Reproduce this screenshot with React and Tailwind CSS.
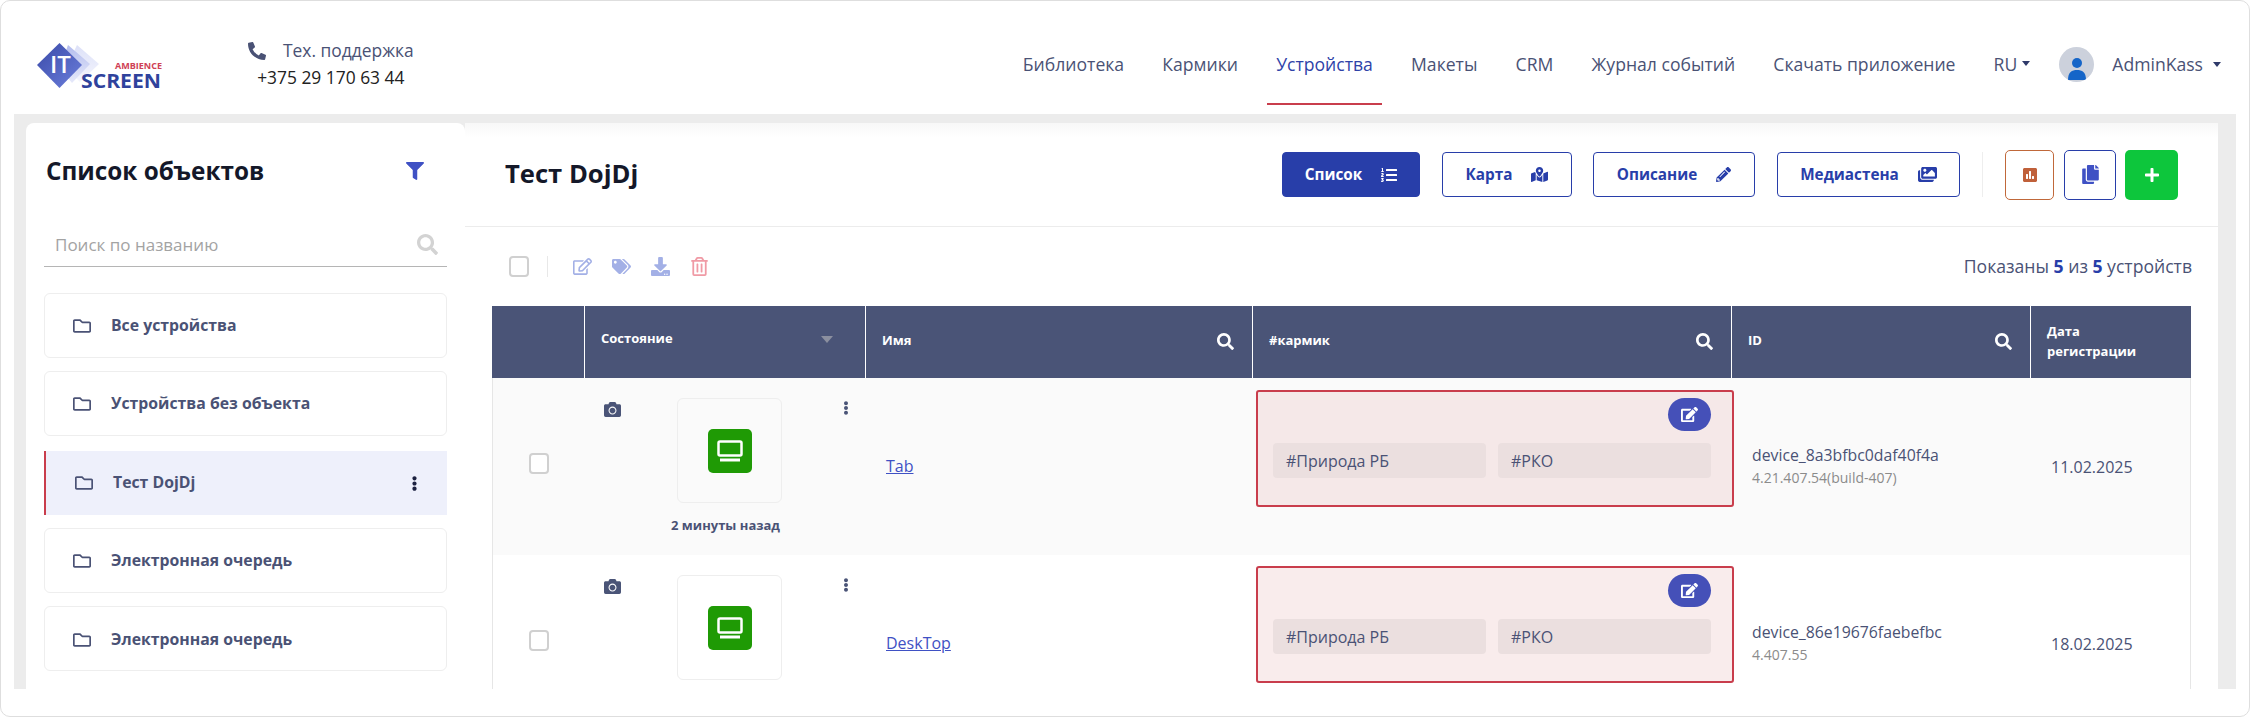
import {
  FaPhoneAlt,
  FaFilter,
  FaSearch,
  FaRegFolder,
  FaEllipsisV,
  FaListOl,
  FaMapMarkedAlt,
  FaPencilAlt,
  FaImages,
  FaPoll,
  FaCopy,
  FaPlus,
  FaRegEdit,
  FaTags,
  FaDownload,
  FaRegTrashAlt,
  FaCamera,
  FaEdit,
} from "react-icons/fa";

const NAV = [
  "Библиотека",
  "Кармики",
  "Устройства",
  "Макеты",
  "CRM",
  "Журнал событий",
  "Скачать приложение",
];

function Logo() {
  return (
    <svg width="128" height="50" viewBox="0 0 128 50" className="shrink-0">
      <defs>
        <linearGradient id="logoMain" x1="0" y1="0" x2="1" y2="1">
          <stop offset="0" stopColor="#3a4aa8" />
          <stop offset="1" stopColor="#6c7fdc" />
        </linearGradient>
        <linearGradient id="logoBack" x1="0" y1="0" x2="0" y2="1">
          <stop offset="0" stopColor="#b4bdee" />
          <stop offset="1" stopColor="#e6e9fa" />
        </linearGradient>
        <linearGradient id="logoBack2" x1="0" y1="0" x2="0" y2="1">
          <stop offset="0" stopColor="#dde1f8" />
          <stop offset="1" stopColor="#f4f5fd" />
        </linearGradient>
      </defs>
      <path d="M41 3 L63 22 L44 40 L30 26 Z" fill="url(#logoBack2)" />
      <path d="M32 3 L54 22 L36 41 L24 26 Z" fill="url(#logoBack)" />
      <path d="M23.5 1 L46 23 L23.5 46 L1 23 Z" fill="url(#logoMain)" />
      <text x="14" y="31" fill="#fff" fontFamily="'Open Sans', sans-serif" fontWeight="600" fontSize="24">
        IT
      </text>
      <text x="79" y="27" fill="#cf4155" fontFamily="'Open Sans', sans-serif" fontWeight="700" fontSize="9.5" textLength="47" lengthAdjust="spacingAndGlyphs">
        AMBIENCE
      </text>
      <text x="45" y="46" fill="#2f429c" fontFamily="'Open Sans', sans-serif" fontWeight="700" fontSize="20" textLength="80" lengthAdjust="spacingAndGlyphs">
        SCREEN
      </text>
    </svg>
  );
}

function Caret({ className }) {
  return <span className={"inline-block border-x-[4px] border-t-[5px] border-x-transparent " + className} />;
}

function Header() {
  return (
    <header className="flex h-[113px] shrink-0 items-start pl-[35px] pr-[28px]">
      <div className="mt-[41px]">
        <Logo />
      </div>
      <div className="ml-[84px] mt-[35px] flex flex-col items-center text-[17.4px]">
        <div className="flex h-[29px] items-center text-[#4a5275]">
          <FaPhoneAlt className="mr-[17px] text-[18px]" />
          <span>Тех. поддержка</span>
        </div>
        <div className="h-[25px] leading-[25px] text-[#222]">+375 29 170 63 44</div>
      </div>
      <nav className="ml-auto flex h-[103px] items-center pt-[23px] text-[17.6px] text-[#4a5275]">
        {NAV.map((item) =>
          item === "Устройства" ? (
            <div key={item} className="relative mx-[19.1px] text-[#2f42a8]">
              {item}
              <span className="absolute -left-[9px] -right-[9px] top-[52px] h-[2px] bg-[#c93d4c]" />
            </div>
          ) : (
            <div key={item} className="mx-[19.1px]">
              {item}
            </div>
          )
        )}
        <div className="ml-[19px] flex items-center">
          RU
          <Caret className="ml-[5px] border-t-[#2f3a6a]" />
        </div>
        <div className="ml-[29px] flex h-[35px] w-[35px] items-end justify-center overflow-hidden rounded-full bg-[#ccd1dc]">
          <svg width="20" height="26" viewBox="0 0 20 26">
            <circle cx="10" cy="7" r="5" fill="#1565c8" />
            <path d="M1 24 C1 16 5 14 10 14 C15 14 19 16 19 24 Z" fill="#1565c8" />
          </svg>
        </div>
        <div className="ml-[18px]">AdminKass</div>
        <Caret className="ml-[10px] border-t-[#2f3a6a]" />
      </nav>
    </header>
  );
}

function SideItem({ label, active, last }) {
  if (active) {
    return (
      <div className="mt-[2px] flex h-[64px] items-center border-l-[2px] border-[#c93d4c] bg-[#eef0fb] pl-[29px] pr-[25px]">
        <FaRegFolder className="text-[18px] text-[#4a5275]" />
        <span className="ml-[20px] text-[15.8px] font-bold text-[#4a5275]">{label}</span>
        <FaEllipsisV className="ml-auto text-[15px] text-[#1c2140]" />
      </div>
    );
  }
  return (
    <div className={"flex h-[65px] items-center rounded-[6px] border border-[#eeeeee] bg-white pl-[28px] " + (last ? "pt-[2px]" : "")}>
      <FaRegFolder className="text-[18px] text-[#4a5275]" />
      <span className="ml-[20px] text-[15.8px] font-bold text-[#4a5275]">{label}</span>
    </div>
  );
}

function Sidebar() {
  return (
    <aside className="flex w-[439px] shrink-0 flex-col overflow-hidden rounded-t-[8px] bg-white px-[18px]">
      <div className="mt-[32px] flex h-[32px] items-center justify-between pl-[2px] pr-[23px]">
        <h2 className="text-[24.3px] font-bold text-[#141829]">Список объектов</h2>
        <FaFilter className="text-[18px] text-[#3f51c4]" />
      </div>
      <div className="mt-[36px] flex h-[44px] items-center justify-between border-b border-[#b5b5b5] pl-[11px] pr-[9px]">
        <span className="text-[17px] text-[#a3a3a3]">Поиск по названию</span>
        <FaSearch className="text-[21px] text-[#d3d3d3]" />
      </div>
      <div className="mt-[26px] flex flex-col gap-[13px]">
        <SideItem label="Все устройства" />
        <SideItem label="Устройства без объекта" />
        <SideItem label="Тест DojDj" active />
        <SideItem label="Электронная очередь" />
        <SideItem label="Электронная очередь" last />
      </div>
    </aside>
  );
}

function TabButton({ label, icon, active, width }) {
  return (
    <button className={`flex h-[45px] items-center justify-center gap-[19px] rounded-[4px] border border-[#283ea9] text-[15.3px] font-bold ${width} ${active ? "bg-[#283ea9] text-white" : "bg-white text-[#283ea9]"}`}>
      {label}
      {icon}
    </button>
  );
}

function MainHeader() {
  return (
    <div className="flex h-[104px] shrink-0 items-center border-b border-[#ececec] bg-gradient-to-b from-[#f8f8f8] from-0% to-white to-[14%] pl-[40px] pr-[40px]">
      <h1 className="text-[25.6px] font-bold text-[#141829]">Тест DojDj</h1>
      <div className="ml-auto flex items-center">
        <TabButton label="Список" icon={<FaListOl className="text-[16px]" />} active width="w-[138px]" />
        <div className="ml-[22px]">
          <TabButton label="Карта" icon={<FaMapMarkedAlt className="text-[17px]" />} width="w-[130px]" />
        </div>
        <div className="ml-[21px]">
          <TabButton label="Описание" icon={<FaPencilAlt className="text-[15px]" />} width="w-[162px]" />
        </div>
        <div className="ml-[22px]">
          <TabButton label="Медиастена" icon={<FaImages className="text-[19px]" />} width="w-[183px]" />
        </div>
        <div className="ml-[22px] h-[45px] w-px bg-[#eeeeee]" />
        <button className="ml-[22px] flex h-[50px] w-[49px] items-center justify-center rounded-[5px] border border-[#c0683a] text-[#c0603a]">
          <FaPoll className="text-[16px]" />
        </button>
        <button className="ml-[10px] flex h-[50px] w-[52px] items-center justify-center rounded-[5px] border border-[#283ea9] text-[#3f51c4]">
          <FaCopy className="text-[19px]" />
        </button>
        <button className="ml-[9px] flex h-[50px] w-[53px] items-center justify-center rounded-[5px] bg-[#0dc63c] text-white">
          <FaPlus className="text-[16px]" />
        </button>
      </div>
    </div>
  );
}

function Checkbox() {
  return <span className="block h-[21px] w-[20px] rounded-[4px] border-[2px] border-[#d0d0d0] bg-white" />;
}

function Toolbar() {
  return (
    <div className="flex h-[79px] shrink-0 items-center pl-[44px] pr-[26px]">
      <Checkbox />
      <div className="ml-[18px] h-[21px] w-px bg-[#e8e8e8]" />
      <div className="ml-[25px] flex items-center gap-[20px] text-[19px] text-[#a3b0e6]">
        <FaRegEdit />
        <FaTags />
        <FaDownload />
        <FaRegTrashAlt className="text-[#f09aa5]" />
      </div>
      <div className="ml-auto text-[17.6px] text-[#4a5275]">
        Показаны <b className="text-[#283ea9]">5</b> из <b className="text-[#283ea9]">5</b> устройств
      </div>
    </div>
  );
}

const COLS = "grid grid-cols-[92px_281px_387px_479px_299px_161px]";

function HeadCell({ children, search, className }) {
  return (
    <div className={"flex items-center border-l border-white pb-[2px] pr-[18px] text-[13px] font-bold text-white " + className}>
      <span>{children}</span>
      {search && <FaSearch className="ml-auto text-[17px]" />}
    </div>
  );
}

function TableHead() {
  return (
    <div className={COLS + " h-[72px] shrink-0 bg-[#4a5477]"}>
      <div />
      <div className="flex items-center border-l border-white pb-[6px] pl-[16px] pr-[32px] text-[13px] font-bold text-white">
        <span>Состояние</span>
        <Caret className="ml-auto border-x-[6px] border-t-[7px] border-t-[#8b8f9f]" />
      </div>
      <HeadCell search className="pl-[16px]">Имя</HeadCell>
      <HeadCell search className="pl-[16px]">#кармик</HeadCell>
      <HeadCell search className="pl-[16px]">ID</HeadCell>
      <HeadCell className="pl-[16px] leading-[20px]">
        <span className="block w-[100px]">Дата регистрации</span>
      </HeadCell>
    </div>
  );
}

function Row({ name, device, version, date, time, bg, tagBg, topGap }) {
  return (
    <div className={COLS + " h-[177px] shrink-0 " + bg}>
      <div className="flex items-center pb-[6px] pl-[36px]">
        <Checkbox />
      </div>
      <div className="flex flex-col items-center pt-[20px]">
        <div className="flex w-full items-start pl-[19px]">
          <FaCamera className="mt-[3px] text-[17px] text-[#4a5477]" />
          <div className="ml-[56px] flex h-[105px] w-[105px] items-center justify-center rounded-[6px] border border-[#eeeeee]">
            <div className="flex h-[44px] w-[44px] items-center justify-center rounded-[5px] bg-[#1f9a05]">
              <svg width="26" height="22" viewBox="0 0 26 22" fill="none">
                <rect x="1.5" y="1.5" width="23" height="14" rx="1.5" stroke="#fff" strokeWidth="2.5" />
                <rect x="3" y="18.5" width="20" height="3" fill="#fff" />
              </svg>
            </div>
          </div>
          <FaEllipsisV className="ml-[57px] mt-[3px] text-[14px] text-[#4a5477]" />
        </div>
        {time && <div className="mt-[13px] text-[13px] font-bold leading-[18px] text-[#4a5275]">{time}</div>}
      </div>
      <div className="flex items-center pb-[2px] pl-[20px] text-[16px] text-[#3f51c4] underline">{name}</div>
      <div className={"pl-[3px] " + topGap}>
        <div className={"relative z-10 h-[117px] w-[478px] rounded-[3px] border-[2px] border-[#c93d4c] pl-[15px] pr-[21px] pt-[6px] " + tagBg}>
          <div className="flex justify-end">
            <span className="flex h-[33px] w-[43px] items-center justify-center rounded-full bg-[#4550b8] text-[17px] text-white">
              <FaEdit />
            </span>
          </div>
          <div className="mt-[12px] flex gap-[12px] text-[16px] text-[#4a5275]">
            <div className="flex h-[35px] w-[213px] items-center rounded-[4px] bg-[#ebdfdf] pl-[13px]">#Природа РБ</div>
            <div className="flex h-[35px] w-[213px] items-center rounded-[4px] bg-[#ebdfdf] pl-[13px]">#РКО</div>
          </div>
        </div>
      </div>
      <div className="flex flex-col justify-center pb-[2px] pl-[20px]">
        <div className="text-[15.8px] leading-[24px] text-[#4a5275]">{device}</div>
        <div className="text-[14px] leading-[22px] text-[#8b8b8b]">{version}</div>
      </div>
      <div className="flex items-center pl-[20px] text-[16px] text-[#4a5275]">{date}</div>
    </div>
  );
}

export default function App() {
  return (
    <div className="flex h-[717px] w-[2250px] flex-col overflow-hidden rounded-[10px] border border-[#dedede] bg-white font-['Open_Sans',sans-serif]">
      <Header />
      <div className="mx-[13px] flex h-[575px] shrink-0 bg-[#ececec] pl-[12px] pr-[18px] pt-[9px]">
        <Sidebar />
        <main className="flex min-w-0 flex-1 flex-col overflow-hidden bg-white">
          <MainHeader />
          <Toolbar />
          <div className="mx-[27px] flex min-h-0 flex-1 flex-col overflow-hidden">
            <TableHead />
            <div className="shrink-0 border-x border-[#e6e6e6]">
              <Row name="Tab" device="device_8a3bfbc0daf40f4a" version="4.21.407.54(build-407)" date="11.02.2025" time="2 минуты назад" bg="bg-[#fafafa]" tagBg="bg-[#f5e8e8]" topGap="pt-[12px]" />
              <Row name="DeskTop" device="device_86e19676faebefbc" version="4.407.55" date="18.02.2025" bg="bg-white" tagBg="bg-[#f9ecec]" topGap="pt-[11px]" />
            </div>
          </div>
        </main>
      </div>
    </div>
  );
}
